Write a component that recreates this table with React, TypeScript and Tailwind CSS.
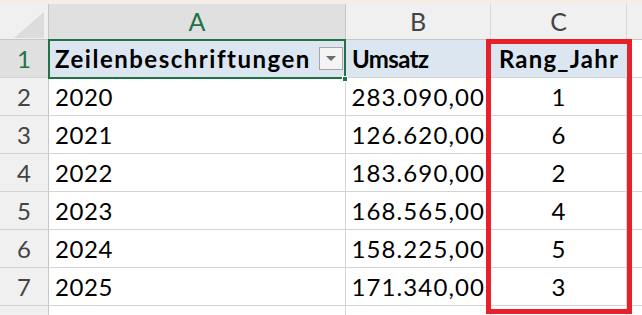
import React from "react";

const rows = [
  ["2020", "283.090,00", "1"],
  ["2021", "126.620,00", "6"],
  ["2022", "183.690,00", "2"],
  ["2023", "168.565,00", "4"],
  ["2024", "158.225,00", "5"],
  ["2025", "171.340,00", "3"],
];

export default function App() {
  return (
    <div
      className="relative w-[642px] h-[315px] overflow-hidden bg-white text-black"
      style={{ fontFamily: "Lato, 'Noto Sans', sans-serif" }}
    >
      <div className="h-[4px] bg-[#f4eee7]" />
      {/* column header */}
      <div className="flex h-[36px] bg-[#f0f0f0] border-b border-[#c6c6c6] text-[25px] text-[#444]">
        <div className="relative w-[49px] shrink-0 border-r border-[#c6c6c6]">
          <svg className="absolute left-[14px] top-[8px]" width="30" height="26" viewBox="0 0 30 26">
            <polygon points="30,0 30,26 0,26" fill="#dcdcdc" />
          </svg>
        </div>
        <div className="w-[297px] shrink-0 flex items-center justify-center bg-[#e0e0e0] text-[#217346] border-r border-[#c6c6c6]">
          A
        </div>
        <div className="w-[145px] shrink-0 flex items-center justify-center border-r border-[#d9d9d9]">B</div>
        <div className="w-[136px] shrink-0 flex items-center justify-center border-r border-[#d9d9d9]">C</div>
        <div className="flex-1" />
      </div>
      {/* row 1 */}
      <div className="flex h-[38px] border-b border-[#d4d4d4] text-[24px]">
        <div className="w-[49px] shrink-0 flex items-center justify-center bg-[#e0e0e0] text-[#217346] border-r border-[#c6c6c6]">
          1
        </div>
        <div className="w-[297px] shrink-0 flex items-center justify-between pl-[6px] pr-[3px] bg-[#dce6f1] font-bold">
          <span className="tracking-[1.5px]">Zeilenbeschriftungen</span>
          <span className="flex h-[23px] w-[24px] items-center justify-center border border-[#a6a6a6] bg-[#f4f4f4]">
            <svg width="10" height="6" viewBox="0 0 10 6">
              <polygon points="0,0 10,0 5,5" fill="#6b6b6b" />
            </svg>
          </span>
        </div>
        <div className="w-[145px] shrink-0 flex items-center pl-[6px] bg-[#dce6f1] font-bold tracking-[-0.6px]">Umsatz</div>
        <div className="w-[136px] shrink-0 flex items-center justify-center bg-[#dce6f1] font-bold tracking-[1.2px]">Rang_Jahr</div>
        <div className="flex-1 border-l border-[#d4d4d4]" />
      </div>
      {rows.map((r, i) => (
        <div key={i} className="flex h-[38px] border-b border-[#d4d4d4] text-[24px]">
          <div className="w-[49px] shrink-0 flex items-center justify-center bg-[#f0f0f0] text-[#444] border-r border-[#c6c6c6]">
            {i + 2}
          </div>
          <div className="w-[297px] shrink-0 flex items-center pl-[6px] pt-[1px] border-r border-[#d4d4d4] tracking-[0.6px]">{r[0]}</div>
          <div className="w-[145px] shrink-0 flex items-center justify-end pr-[5px] pt-[1px] border-r border-[#d4d4d4] tracking-[1.1px]">{r[1]}</div>
          <div className="w-[136px] shrink-0 flex items-center justify-center pt-[1px] border-r border-[#d4d4d4]">{r[2]}</div>
          <div className="flex-1" />
        </div>
      ))}
      <div className="flex h-[20px]">
        <div className="w-[49px] shrink-0 bg-[#f0f0f0] border-r border-[#c6c6c6]" />
        <div className="w-[297px] shrink-0 border-r border-[#d4d4d4]" />
        <div className="w-[145px] shrink-0 border-r border-[#d4d4d4]" />
        <div className="w-[136px] shrink-0 border-r border-[#d4d4d4]" />
      </div>
      {/* active cell */}
      <div className="absolute left-[48px] top-[39px] w-[298px] h-[40px] border-2 border-[#217346]" />
      <div className="absolute left-[342px] top-[76px] w-[6px] h-[6px] bg-[#217346] border border-white" />
      {/* red box */}
      <div className="absolute left-[486px] top-[39px] w-[146px] h-[275px] border-[5px] border-[#e8202a]" />
    </div>
  );
}
